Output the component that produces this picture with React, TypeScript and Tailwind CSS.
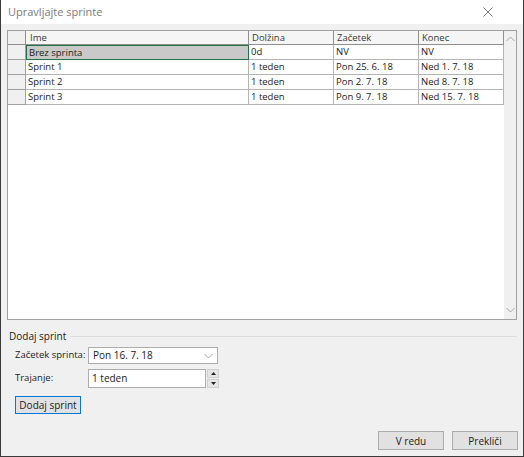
import React from "react";

type Row = { name: string; len: string; start: string; end: string; selected?: boolean };

const rows: Row[] = [
  { name: "Brez sprinta", len: "0d", start: "NV", end: "NV", selected: true },
  { name: "Sprint 1", len: "1 teden", start: "Pon 25. 6. 18", end: "Ned 1. 7. 18" },
  { name: "Sprint 2", len: "1 teden", start: "Pon 2. 7. 18", end: "Ned 8. 7. 18" },
  { name: "Sprint 3", len: "1 teden", start: "Pon 9. 7. 18", end: "Ned 15. 7. 18" },
];

const font = { fontFamily: '"Open Sans", Lato, sans-serif' };

function Chevron({ up }: { up?: boolean }) {
  return (
    <svg width="9" height="6" viewBox="0 0 9 6" className="block">
      <path
        d={up ? "M0.5 5 L4.5 1 L8.5 5" : "M0.5 1 L4.5 5 L8.5 1"}
        fill="none"
        stroke="#a6a6a6"
        strokeWidth="1"
      />
    </svg>
  );
}

function Grid() {
  return (
    <div className="ml-[6px] mt-[6px] w-[510px] h-[290px] bg-white border border-[#a0a0a0] flex">
      <div className="flex-1 flex flex-col">
        {/* header row */}
        <div className="flex h-[14px] text-[9.5px] leading-[13px] text-[#3a3a3a]">
          <div className="w-[18px] bg-[#f0f0f0] border-r border-b border-[#8f8f8f]" />
          <div className="w-[223px] bg-[#f5f5f5] border-r border-b border-[#8f8f8f] pl-[4px]">Ime</div>
          <div className="w-[85px] bg-[#f5f5f5] border-r border-b border-[#8f8f8f] pl-[3px]">Dolžina</div>
          <div className="w-[85px] bg-[#f5f5f5] border-r border-b border-[#8f8f8f] pl-[3px]">Začetek</div>
          <div className="w-[85px] bg-[#f5f5f5] border-r border-b border-[#8f8f8f] pl-[3px]">Konec</div>
        </div>
        {rows.map((r) => (
          <div key={r.name} className="flex h-[15px] text-[9.5px] leading-[14px] text-[#222]">
            <div className="w-[18px] bg-[#f0f0f0] border-r border-b border-[#a0a0a0]" />
            <div
              className={
                r.selected
                  ? "w-[223px] bg-[#c9c9c9] border border-[#217346] pl-[2px] leading-[13px]"
                  : "w-[223px] border-r border-b border-[#b4b4b4] pl-[2px]"
              }
            >
              {r.name}
            </div>
            <div className="w-[85px] border-r border-b border-[#b4b4b4] pl-[2px]">{r.len}</div>
            <div className="w-[85px] border-r border-b border-[#b4b4b4] pl-[2px]">{r.start}</div>
            <div className="w-[85px] border-r border-b border-[#b4b4b4] pl-[2px]">{r.end}</div>
          </div>
        ))}
      </div>
      {/* vertical scrollbar */}
      <div className="w-[12px] bg-[#f0f0f0] flex flex-col items-center justify-between pt-[5px] pb-[6px]">
        <Chevron up />
        <Chevron />
      </div>
    </div>
  );
}

export default function App() {
  return (
    <div
      style={font}
      className="w-[524px] h-[457px] bg-[#f0f0f0] border-l border-r border-b border-[#3a3a3a] flex flex-col text-[#222]"
    >
      {/* title bar */}
      <div className="h-[24px] bg-white flex items-center justify-between pl-[7px] pr-[30px]">
        <span className="text-[11px] text-[#7a7a7a]">Upravljajte sprinte</span>
        <svg width="10" height="10" viewBox="0 0 10 10">
          <path d="M0.5 0.5 L9.5 9.5 M9.5 0.5 L0.5 9.5" stroke="#7a7a7a" strokeWidth="1" />
        </svg>
      </div>

      <Grid />

      {/* add sprint group */}
      <div className="mt-[10px] flex items-center h-[12px] pl-[8px] pr-[6px]">
        <span className="text-[10px] leading-[12px] whitespace-nowrap">Dodaj sprint</span>
        <div className="flex-1 h-px bg-[#dcdcdc] ml-[4px]" />
      </div>

      <div className="mt-[5px] flex items-center h-[17px] pl-[14px]">
        <span className="w-[73px] text-[9.5px] whitespace-nowrap">Začetek sprinta:</span>
        <div className="w-[130px] h-[17px] bg-white border border-[#adadad] flex items-center justify-between pl-[4px] pr-[4px] text-[10px]">
          <span>Pon 16. 7. 18</span>
          <Chevron />
        </div>
      </div>

      <div className="mt-[5px] flex items-center h-[19px] pl-[14px]">
        <span className="w-[73px] text-[9.5px] whitespace-nowrap">Trajanje:</span>
        <div className="w-[118px] h-[19px] bg-white border border-[#adadad] flex items-center pl-[3px] text-[10px]">
          1 teden
        </div>
        <div className="w-[12px] h-[19px] ml-px flex flex-col gap-px">
          <div className="flex-1 bg-[#e6e6e6] border border-[#d0d0d0] flex items-center justify-center">
            <svg width="5" height="3" viewBox="0 0 5 3"><path d="M0 3 L2.5 0 L5 3 Z" fill="#222" /></svg>
          </div>
          <div className="flex-1 bg-[#e6e6e6] border border-[#d0d0d0] flex items-center justify-center">
            <svg width="5" height="3" viewBox="0 0 5 3"><path d="M0 0 L2.5 3 L5 0 Z" fill="#222" /></svg>
          </div>
        </div>
      </div>

      <div className="mt-[8px] flex pl-[14px]">
        <button className="w-[66px] h-[18px] bg-[#e1e1e1] border border-[#0078d7] text-[10px] leading-[14px] text-[#222]">
          Dodaj sprint
        </button>
      </div>

      <div className="mt-[17px] flex justify-end gap-[8px] pr-[5px]">
        <button className="w-[66px] h-[19px] bg-[#e1e1e1] border border-[#adadad] text-[10px] leading-[14px]">
          V redu
        </button>
        <button className="w-[66px] h-[19px] bg-[#e1e1e1] border border-[#adadad] text-[10px] leading-[14px]">
          Prekliči
        </button>
      </div>
    </div>
  );
}
